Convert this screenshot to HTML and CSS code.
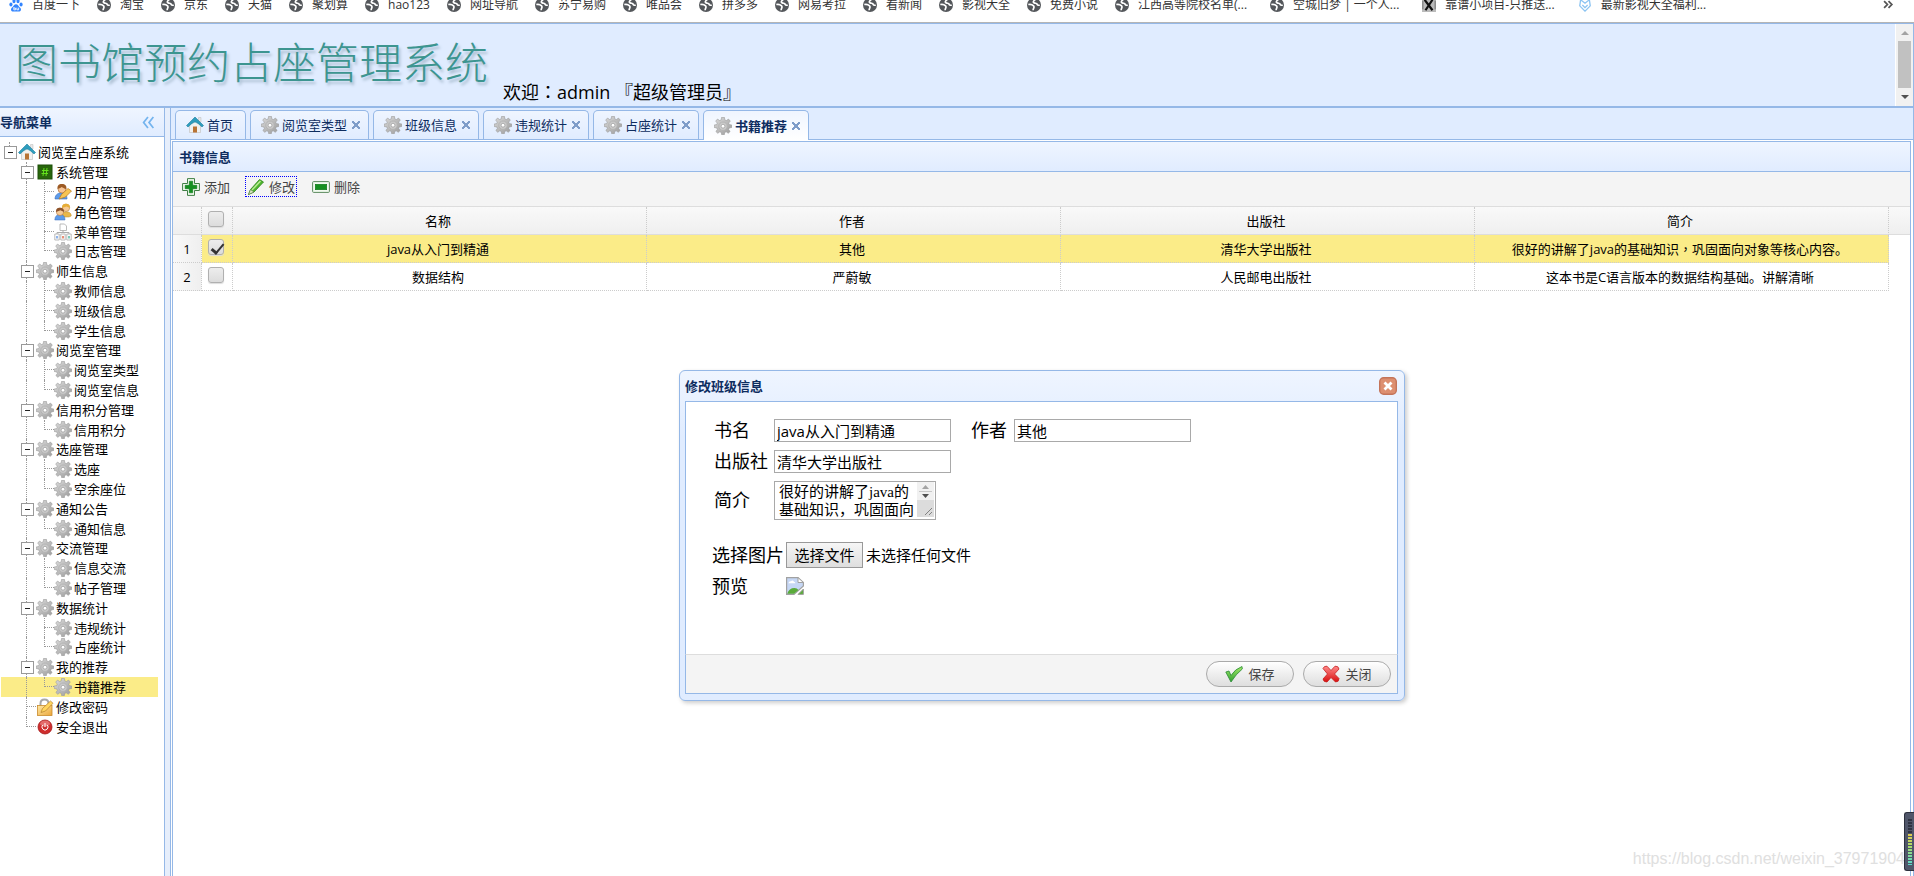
FILE: index.html
```html
<!DOCTYPE html>
<html lang="zh-CN">
<head>
<meta charset="utf-8">
<title>图书馆预约占座管理系统</title>
<link rel="stylesheet" href="styles.css">
</head>
<body>
<svg class="sprite" aria-hidden="true">
  <defs>
    <linearGradient id="gearFill" x1="0" y1="0" x2="1" y2="1"><stop offset="0" stop-color="#dcdcdc"/><stop offset="1" stop-color="#9a9a9a"/></linearGradient>
    <linearGradient id="redFill" x1="0" y1="0" x2="0" y2="1"><stop offset="0" stop-color="#ff8a8a"/><stop offset="1" stop-color="#d80f0f"/></linearGradient>
    <linearGradient id="greenFill" x1="0" y1="0" x2="0" y2="1"><stop offset="0" stop-color="#a4ec6a"/><stop offset="1" stop-color="#2f9e2f"/></linearGradient>
    <linearGradient id="goldFill" x1="0" y1="0" x2="1" y2="1"><stop offset="0" stop-color="#ffe9a6"/><stop offset="1" stop-color="#eba63a"/></linearGradient>
  </defs>
  <symbol id="globe" viewBox="0 0 16 16"><circle cx="8" cy="8" r="8" fill="#54575b"/><path d="M9.500 1.800C7.500 3 6.500 4.500 8 5.500C9.500 6.500 11 5.500 11.500 7C12 8.500 13.500 8.500 14.500 8M1.500 7.500C3.500 7 6 7.500 7.500 9C9 10.500 7 11.500 7 14" fill="none" stroke="#fff" stroke-width="1.900"/></symbol>
  <symbol id="paw" viewBox="0 0 16 16"><g fill="#3385ff"><ellipse cx="2.200" cy="7.500" rx="1.800" ry="2.300"/><ellipse cx="5.700" cy="3.500" rx="1.800" ry="2.500"/><ellipse cx="10.300" cy="3.500" rx="1.800" ry="2.500"/><ellipse cx="13.800" cy="7.500" rx="1.800" ry="2.300"/><path d="M8 7C5.800 7 5 9.500 3.200 11C1.500 12.500 2.300 15.500 4.800 15.500H11.200C13.700 15.500 14.500 12.500 12.800 11C11 9.500 10.200 7 8 7Z"/></g><path d="M5.500 10.500V13.500H7.500V11.500H5.500M9 11V13.500H11V11" stroke="#fff" fill="none"/></symbol>
  <symbol id="gear" viewBox="0 0 18 18"><path d="M7.600 .3H10.400L10.800 2.900L12.300 3.600L14.500 2.100L16.300 4.100L14.700 6.100L15.300 7.600L17.800 8V10.500L15.300 10.900L14.600 12.400L16.100 14.500L14.200 16.300L12.200 14.800L10.700 15.400L10.300 17.800H7.700L7.300 15.400L5.800 14.800L3.800 16.300L1.900 14.500L3.400 12.400L2.700 10.900L.2 10.500V8L2.700 7.600L3.300 6.100L1.700 4.100L3.500 2.100L5.700 3.600L7.200 2.900Z" fill="url(#gearFill)" stroke="#9b9b9b" stroke-width=".6"/><circle cx="9" cy="9.200" r="4.200" fill="#c9c9c9" stroke="#b0b0b0" stroke-width=".8"/><circle cx="9" cy="9.200" r="1.900" fill="#fff" stroke="#999" stroke-width=".7"/></symbol>
  <symbol id="home" viewBox="0 0 18 18"><path d="M12.500 1.500H15V6H12.500Z" fill="#e8e8e8" stroke="#bbb" stroke-width=".5"/><path d="M3.500 9L9 4L14.500 9V16.500H3.500Z" fill="#f1f1ef" stroke="#c4c4c4" stroke-width=".7"/><path d="M7 10.500H11V16.500H7Z" fill="#b87335"/><path d="M.5 9.500L9 1L17.500 9.500L16 11Q12 6.700 9 5.900Q6 6.700 2 11Z" fill="#2e9dbd" stroke="#1c7d9e" stroke-width=".6"/></symbol>
  <symbol id="hash" viewBox="0 0 18 18"><rect x="2" y="2" width="14" height="14" fill="#28660c" stroke="#1d4f08"/><path d="M8 5L7 13M11 5L10 13M6 7.500H12.500M5.500 10.500H12" stroke="#63e11c"/></symbol>
  <symbol id="user" viewBox="0 0 18 18"><path d="M1 16C1 11 5 9.500 8 10C12 10 13 13 13 16Z" fill="#5d9bea" stroke="#396fbd" stroke-width=".6"/><circle cx="8" cy="6" r="4" fill="#f7c596" stroke="#a5642d" stroke-width=".6"/><path d="M3.500 6C3 1.500 6 .8 8 1C11 1 13 2.500 12.300 6C10 5.800 9 4.500 7.500 4C6.500 5 5 5.500 3.500 6Z" fill="#9d5b25"/><path d="M5 16L7.500 11.500L14 5.500L17.500 8L11.500 14Z" fill="#f7c453" stroke="#b97a21" stroke-width=".7"/></symbol>
  <symbol id="users" viewBox="0 0 18 18"><path d="M7 12C7 8 17.500 7 17.200 13L15 14H8Z" fill="#e9b84a" stroke="#b98a30" stroke-width=".5"/><circle cx="12" cy="4.800" r="3.700" fill="#f7cb96" stroke="#a67235" stroke-width=".5"/><path d="M8 5Q8 .6 12 .8Q16 .8 16 5L12.500 3.500Z" fill="#e7ae38"/><path d="M.8 17Q1 11.500 6 11.500T11 17Z" fill="#5d9bea" stroke="#396fbd" stroke-width=".5"/><circle cx="6" cy="8.800" r="3.700" fill="#f7cb96" stroke="#a5642d" stroke-width=".5"/><path d="M2 9Q2 4.500 6 4.800Q10 4.800 10 9L6.500 7.200Z" fill="#8d522a"/></symbol>
  <symbol id="sitemap" viewBox="0 0 18 18"><path d="M6 1H10.500L12.500 3V7.500H6Z" fill="#fff" stroke="#aaa" stroke-width=".8"/><path d="M9 7.500V10M3 11V9.500H15V11" fill="none" stroke="#aaa"/><path d="M.8 11H5.200V17H.8ZM6.800 11H11.200V17H6.800ZM12.800 11H17.200V17H12.800Z" fill="#fff" stroke="#aaa" stroke-width=".8"/><path d="M3 13V15.500" stroke="#6a9be5" stroke-width="1.500"/><path d="M9 13V15.500" stroke="#e06a4a" stroke-width="1.500"/><path d="M15 13V15.500" stroke="#54b8a3" stroke-width="1.500"/></symbol>
  <symbol id="lock" viewBox="0 0 18 18"><path d="M4.500 8V5.500Q4.500 1.500 8.500 1.500T12.500 5.500V8" fill="none" stroke="#a8a8a8" stroke-width="2"/><rect x="1.500" y="7.500" width="14.500" height="10" fill="url(#goldFill)" stroke="#c98b2c" stroke-width=".8"/><path d="M5 14.500L6.500 10.500L14.500 3L17 5.300L9.500 13Z" fill="#ffd55e" stroke="#b5802a" stroke-width=".7"/></symbol>
  <symbol id="power" viewBox="0 0 18 18"><circle cx="9" cy="9" r="7" fill="#cf2d2d" stroke="#a31818" stroke-width=".8"/><ellipse cx="9" cy="5.500" rx="5" ry="3" fill="#ec8585" opacity=".7"/><path d="M7 6.800A3 3 0 1 0 11 6.800M9 5V9" fill="none" stroke="#fff"/></symbol>
  <symbol id="add" viewBox="0 0 18 18"><path d="M5.500 .6H12.500V5.500H17.400V12.500H12.500V17.400H5.500V12.500H.6V5.500H5.500Z" fill="#f1faef" stroke="#407f45" stroke-linejoin="round"/><path d="M7.300 3.200H10.700V7.300H14.800V10.700H10.700V14.800H7.300V10.700H3.200V7.300H7.300Z" fill="#159020" stroke="#0b7417" stroke-width=".6"/></symbol>
  <symbol id="pencil" viewBox="0 0 18 18"><path d="M1.500 16.500L3.500 11.500L12.500 1.500L16.500 4L7 14Z" fill="#4fb62f" stroke="#2c831b" stroke-width=".8"/><path d="M5 12L13.500 3" stroke="#b9ec94" stroke-width="1.500"/><path d="M1.500 16.500L3.500 11.500L7 14Z" fill="#d9e7bf" stroke="#587b45" stroke-width=".6"/></symbol>
  <symbol id="minus" viewBox="0 0 18 18"><rect x=".6" y="3.600" width="16.800" height="10.800" rx="1" fill="#f1faef" stroke="#5c8a5f"/><rect x="3.300" y="6.300" width="11.400" height="5.400" fill="#159020" stroke="#0b7417" stroke-width=".6"/></symbol>
  <symbol id="ok" viewBox="0 0 18 18"><path d="M.8 7L4 6L6 10.500Q10 4 17 1.500L17.300 4Q11 9 6 17Z" fill="url(#greenFill)" stroke="#2a8a35" stroke-width=".8"/></symbol>
  <symbol id="cancel" viewBox="0 0 18 18"><path d="M1 3.500Q2 .8 5 1.200L9 5.500L13 1.200Q16.500 .8 17 4L12.500 9L17 13.500Q17 17 13.500 17L9 12.500L5 17Q1.500 17.200 1 14L5.500 9Z" fill="url(#redFill)" stroke="#c41e1e" stroke-width=".8"/></symbol>
  <symbol id="broken" viewBox="0 0 18 18"><path d="M.6 .6H12L17.400 5.500V9L8 17.400H.6Z" fill="#c6d7f5" stroke="#a1a1a1" stroke-width="1.200"/><path d="M12 .6V5.500H17.400Z" fill="#fff" stroke="#a1a1a1"/><path d="M2.500 6Q3 4 5 4.300Q6.500 2.500 8 4.700Q9.500 5 9.300 6.200H2.500Z" fill="#fff"/><path d="M1.200 16.800Q3 11 8.500 11Q11 11 12.500 13L8 16.800Z" fill="#5aab3a"/><path d="M17.400 12V17.400H12Z" fill="#5aab3a" stroke="#a1a1a1"/></symbol>
</svg>

<nav class="bookmarks" aria-label="书签">
  <a href="#"><svg><use href="#paw"/></svg>百度一下</a>
  <a href="#"><svg><use href="#globe"/></svg>淘宝</a>
  <a href="#"><svg><use href="#globe"/></svg>京东</a>
  <a href="#"><svg><use href="#globe"/></svg>天猫</a>
  <a href="#"><svg><use href="#globe"/></svg>聚划算</a>
  <a href="#"><svg><use href="#globe"/></svg>hao123</a>
  <a href="#"><svg><use href="#globe"/></svg>网址导航</a>
  <a href="#"><svg><use href="#globe"/></svg>苏宁易购</a>
  <a href="#"><svg><use href="#globe"/></svg>唯品会</a>
  <a href="#"><svg><use href="#globe"/></svg>拼多多</a>
  <a href="#"><svg><use href="#globe"/></svg>网易考拉</a>
  <a href="#"><svg><use href="#globe"/></svg>看新闻</a>
  <a href="#"><svg><use href="#globe"/></svg>影视大全</a>
  <a href="#"><svg><use href="#globe"/></svg>免费小说</a>
  <a href="#" class="long"><svg><use href="#globe"/></svg>江西高等院校名单(...</a>
  <a href="#" class="long"><svg><use href="#globe"/></svg>空城旧梦 | 一个人...</a>
  <a href="#" class="long"><svg viewBox="0 0 16 16"><path d="M0 0H16V16H0Z" fill="#bbb"/><path d="M3 2L12 14M12 2L4 14" stroke="#111" stroke-width="2.500"/><path d="M1 3V13M15 3V13" stroke="#666"/></svg>靠谱小项目-只推送...</a>
  <a href="#" class="long"><svg viewBox="0 0 16 16"><path d="M3 2L8 6L13 2L14 9L8 15L2 9ZM5 8L8 11L11 8" fill="none" stroke="#8cc4f2" stroke-width="1.500"/></svg>最新影视大全福利...</a>
  <button class="more" type="button" aria-label="更多书签"><svg viewBox="0 0 10 8"><path d="M1 1L4 4L1 7M5 1L8 4L5 7" fill="none" stroke="#555" stroke-width="1.600"/></svg></button>
</nav>

<header class="north">
  <h1>图书馆预约占座管理系统</h1>
  <p class="welcome">欢迎<span class="mid" lang="zh-TW">：</span>admin 『超级管理员』</p>
  <div class="scroll" aria-hidden="true"><i class="up"></i><b></b><i class="down"></i></div>
</header>

<div class="layout">
  <aside class="west">
    <div class="west-head"><h2>导航菜单</h2><button type="button" aria-label="收起"><svg viewBox="0 0 12 12"><path d="M5.500 1L1.500 6L5.500 11M10.500 1L6.500 6L10.500 11" fill="none" stroke="#74b4ee" stroke-width="1.600"/></svg></button></div>
    <ul class="tree">
      <li><i class="box root"></i><svg><use href="#home"/></svg><a href="#">阅览室占座系统</a></li>
      <li><i></i><i class="box"></i><svg><use href="#hash"/></svg><a href="#">系统管理</a></li>
      <li><i></i><i class="line"></i><i class="join"></i><svg><use href="#user"/></svg><a href="#">用户管理</a></li>
      <li><i></i><i class="line"></i><i class="join"></i><svg><use href="#users"/></svg><a href="#">角色管理</a></li>
      <li><i></i><i class="line"></i><i class="join"></i><svg><use href="#sitemap"/></svg><a href="#">菜单管理</a></li>
      <li><i></i><i class="line"></i><i class="join end"></i><svg><use href="#gear"/></svg><a href="#">日志管理</a></li>
      <li><i></i><i class="box"></i><svg><use href="#gear"/></svg><a href="#">师生信息</a></li>
      <li><i></i><i class="line"></i><i class="join"></i><svg><use href="#gear"/></svg><a href="#">教师信息</a></li>
      <li><i></i><i class="line"></i><i class="join"></i><svg><use href="#gear"/></svg><a href="#">班级信息</a></li>
      <li><i></i><i class="line"></i><i class="join end"></i><svg><use href="#gear"/></svg><a href="#">学生信息</a></li>
      <li><i></i><i class="box"></i><svg><use href="#gear"/></svg><a href="#">阅览室管理</a></li>
      <li><i></i><i class="line"></i><i class="join"></i><svg><use href="#gear"/></svg><a href="#">阅览室类型</a></li>
      <li><i></i><i class="line"></i><i class="join end"></i><svg><use href="#gear"/></svg><a href="#">阅览室信息</a></li>
      <li><i></i><i class="box"></i><svg><use href="#gear"/></svg><a href="#">信用积分管理</a></li>
      <li><i></i><i class="line"></i><i class="join end"></i><svg><use href="#gear"/></svg><a href="#">信用积分</a></li>
      <li><i></i><i class="box"></i><svg><use href="#gear"/></svg><a href="#">选座管理</a></li>
      <li><i></i><i class="line"></i><i class="join"></i><svg><use href="#gear"/></svg><a href="#">选座</a></li>
      <li><i></i><i class="line"></i><i class="join end"></i><svg><use href="#gear"/></svg><a href="#">空余座位</a></li>
      <li><i></i><i class="box"></i><svg><use href="#gear"/></svg><a href="#">通知公告</a></li>
      <li><i></i><i class="line"></i><i class="join end"></i><svg><use href="#gear"/></svg><a href="#">通知信息</a></li>
      <li><i></i><i class="box"></i><svg><use href="#gear"/></svg><a href="#">交流管理</a></li>
      <li><i></i><i class="line"></i><i class="join"></i><svg><use href="#gear"/></svg><a href="#">信息交流</a></li>
      <li><i></i><i class="line"></i><i class="join end"></i><svg><use href="#gear"/></svg><a href="#">帖子管理</a></li>
      <li><i></i><i class="box"></i><svg><use href="#gear"/></svg><a href="#">数据统计</a></li>
      <li><i></i><i class="line"></i><i class="join"></i><svg><use href="#gear"/></svg><a href="#">违规统计</a></li>
      <li><i></i><i class="line"></i><i class="join end"></i><svg><use href="#gear"/></svg><a href="#">占座统计</a></li>
      <li><i></i><i class="box"></i><svg><use href="#gear"/></svg><a href="#">我的推荐</a></li>
      <li class="selected"><i></i><i class="line"></i><i class="join end"></i><svg><use href="#gear"/></svg><a href="#">书籍推荐</a></li>
      <li><i></i><i class="join"></i><svg><use href="#lock"/></svg><a href="#">修改密码</a></li>
      <li><i></i><i class="join end"></i><svg><use href="#power"/></svg><a href="#">安全退出</a></li>
    </ul>
  </aside>

  <main class="center">
    <div class="tabs">
      <div class="tab"><svg><use href="#home"/></svg><a href="#">首页</a></div>
      <div class="tab closable"><svg><use href="#gear"/></svg><a href="#">阅览室类型</a><button type="button" aria-label="关闭标签"></button></div>
      <div class="tab closable"><svg><use href="#gear"/></svg><a href="#">班级信息</a><button type="button" aria-label="关闭标签"></button></div>
      <div class="tab closable"><svg><use href="#gear"/></svg><a href="#">违规统计</a><button type="button" aria-label="关闭标签"></button></div>
      <div class="tab closable"><svg><use href="#gear"/></svg><a href="#">占座统计</a><button type="button" aria-label="关闭标签"></button></div>
      <div class="tab closable active"><svg><use href="#gear"/></svg><a href="#">书籍推荐</a><button type="button" aria-label="关闭标签"></button></div>
    </div>
    <section class="panel">
      <h2 class="panel-title">书籍信息</h2>
      <div class="toolbar">
        <button type="button"><svg><use href="#add"/></svg>添加</button>
        <button type="button" class="focused"><svg><use href="#pencil"/></svg>修改</button>
        <button type="button"><svg><use href="#minus"/></svg>删除</button>
      </div>
      <table class="grid">
        <colgroup><col class="c-num"><col class="c-check"><col><col><col><col><col class="c-rest"></colgroup>
        <thead>
          <tr><th></th><th class="check"><input type="checkbox" aria-label="全选"></th><th>名称</th><th>作者</th><th>出版社</th><th>简介</th><th class="rest"></th></tr>
        </thead>
        <tbody>
          <tr class="picked"><td class="num">1</td><td class="check"><input type="checkbox" aria-label="选择第1行" checked></td><td>java从入门到精通</td><td>其他</td><td>清华大学出版社</td><td>很好的讲解了java的基础知识<span class="mid" lang="zh-TW">，</span>巩固面向对象等核心内容。</td><td class="rest"></td></tr>
          <tr><td class="num">2</td><td class="check"><input type="checkbox" aria-label="选择第2行"></td><td>数据结构</td><td>严蔚敏</td><td>人民邮电出版社</td><td>这本书是C语言版本的数据结构基础。讲解清晰</td><td class="rest"></td></tr>
        </tbody>
      </table>
    </section>
  </main>
</div>

<form class="dialog" role="dialog" aria-labelledby="dlg-title">
  <div class="dialog-head"><h2 id="dlg-title">修改班级信息</h2><button type="button" class="close" aria-label="关闭窗口"><svg viewBox="0 0 18 18"><rect x=".7" y=".7" width="16.600" height="16.600" rx="4" fill="#dd8f70" stroke="#c47459" stroke-width="1.400"/><path d="M5.500 5.500L12.500 12.500M12.500 5.500L5.500 12.500" stroke="#fff" stroke-width="2.800"/></svg></button></div>
  <div class="dialog-body">
    <div class="fields">
      <label for="f-name">书名</label><input id="f-name" type="text" value="java从入门到精通">
      <label for="f-author" class="second">作者</label><input id="f-author" type="text" value="其他">
      <label for="f-press">出版社</label><input id="f-press" type="text" value="清华大学出版社">
      <label for="f-intro" class="row-start">简介</label>
      <div class="area"><textarea id="f-intro">很好的讲解了java的基础知识，巩固面向对象等核心内容。</textarea><span class="area-bar" aria-hidden="true"><svg viewBox="0 0 17 35"><path d="M0 0H17V18H0Z" fill="#f1f1f1"/><path d="M0 18H17V35H0Z" fill="#dcdcdc"/><path d="M5 7L8.500 3L12 7Z" fill="#a3a3a3"/><path d="M2 9.500H15" stroke="#c8c8c8"/><path d="M5 12L8.500 16L12 12Z" fill="#505050"/><path d="M8 33L15 26M12 33L15 30" stroke="#777" stroke-width=".9"/></svg></span></div>
    </div>
    <div class="upload">
      <label for="f-file">选择图片</label>
      <div class="picker"><input id="f-file" type="file"><button type="button">选择文件</button><span>未选择任何文件</span></div>
      <span class="cap">预览</span>
      <svg class="preview" role="img"><use href="#broken"/></svg>
    </div>
  </div>
  <div class="dialog-foot">
    <button type="button"><svg><use href="#ok"/></svg>保存</button>
    <button type="button"><svg><use href="#cancel"/></svg>关闭</button>
  </div>
</form>

<p class="watermark">https://blog.csdn.net/weixin_37971904</p>
<div class="meter" aria-hidden="true"></div>
</body>
</html>
```
FILE: styles.css
```css
* { box-sizing: border-box; }
html, body { height: 100%; }
body {
  margin: 0;
  display: flex;
  flex-direction: column;
  overflow: hidden;
  background: #fff;
  color: #000;
  font: 13px/20px "Open Sans", "Noto Sans CJK SC", sans-serif;
}
h1, h2, p, ul { margin: 0; padding: 0; }
a { color: inherit; text-decoration: none; white-space: nowrap; }
button { font: inherit; color: inherit; background: none; border: 0; padding: 0; }
svg { display: block; flex: none; width: 18px; height: 18px; }
.sprite { position: absolute; width: 0; height: 0; }
.mid { font-family: "Noto Sans CJK TC", sans-serif; }

/* bookmarks */
.bookmarks {
  display: flex;
  flex: none;
  align-items: center;
  height: 23px;
  padding: 0 20px 13px 9px;
  border-bottom: 1px solid #b5b5b5;
  color: #333;
  font-size: 12px;
  line-height: 16px;
}
.bookmarks a { display: flex; align-items: center; gap: 9px; margin-right: 17px; }
.bookmarks .long { margin-right: 23px; }
.bookmarks svg { width: 14px; height: 14px; }
.more { margin-left: auto; }
.bookmarks .more svg { width: 11px; height: 9px; }

/* page header */
.north {
  display: flex;
  flex: none;
  height: 85px;
  border: 1px solid #95b8e7;
  border-bottom-width: 2px;
  border-left: 0;
  background: #e0ecff;
}
.north h1 {
  padding: 9px 0 0 15px;
  color: #3d9590;
  font-size: 43px;
  font-weight: 300;
  line-height: 60px;
  text-shadow: 2px 3px 3px #a9bdd0;
  white-space: nowrap;
}
.welcome { margin: auto 0 1px 15px; font-size: 18px; line-height: 26px; white-space: nowrap; }
.scroll {
  display: flex;
  flex-direction: column;
  align-items: center;
  width: 18px;
  margin-left: auto;
  padding: 7px 0 6px;
  border-left: 1px solid #fff;
  background: #f1f1f1;
}
.scroll b { width: 13px; height: 47px; margin: 6px 0 7px; background: #c1c1c1; }
.scroll i { border: 4px solid transparent; border-top: 0; border-bottom-color: #a3a3a3; }
.scroll .down { border-top: 4px solid #505050; border-bottom: 0; }

.layout { display: flex; flex: 1; min-height: 0; background: #e6eefb; }

/* navigation tree */
.west { flex: none; width: 165px; border-right: 1px solid #95b8e7; background: #fff; }
.west-head {
  display: flex;
  align-items: center;
  justify-content: space-between;
  height: 29px;
  padding-right: 9px;
  border-bottom: 1px solid #95b8e7;
  background: linear-gradient(#eff5ff, #e0ecff);
}
h2 { color: #0e2d5f; font-size: 13px; font-weight: 700; line-height: 20px; }
.west-head svg { width: 13px; height: 13px; }
.tree { padding: 5px 6px 0 1px; list-style: none; }
.tree li { display: flex; align-items: center; height: 20px; }
.tree li:nth-child(5n) { height: 19px; }
.tree a { padding-left: 2px; }
.tree i { position: relative; flex: none; align-self: stretch; width: 18px; }
.tree i:first-child { width: 17px; }
.tree .selected { background: #fbec88; }
.line::before, .join::before, .box::before {
  content: "";
  position: absolute;
  inset: 0 auto 0 8px;
  border-left: 1px dotted #999;
}
.join.end::before, .root::before { bottom: 50%; }
.join::after { content: ""; position: absolute; top: 9px; left: 8px; right: 0; border-top: 1px dotted #999; }
.box::after {
  content: "";
  position: absolute;
  top: 4px;
  left: 3px;
  width: 11px;
  height: 11px;
  border: 1px solid #999;
  background: linear-gradient(#222, #222) center / 5px 1px no-repeat #fff;
}

/* tabs */
.center { display: flex; flex: 1; flex-direction: column; min-width: 0; margin-left: 5px; border: 1px solid #95b8e7; border-width: 0 1px; background: #fff; }
.tabs { display: flex; flex: none; gap: 4px; height: 32px; padding: 2px 4px 0; border-bottom: 1px solid #95b8e7; background: #e0ecff; }
.tab {
  display: flex;
  align-items: center;
  gap: 3px;
  padding: 0 12px 0 10px;
  border: 1px solid #95b8e7;
  border-bottom: 0;
  border-radius: 5px 5px 0 0;
  background: linear-gradient(#eff5ff, #e0ecff);
  color: #0e2d5f;
}
.tab.closable { padding-right: 8px; }
.tab button {
  width: 8px;
  height: 8px;
  margin-left: 2px;
  background:
    linear-gradient(45deg, transparent 42%, #7f9dc9 42%, #7f9dc9 58%, transparent 58%),
    linear-gradient(-45deg, transparent 42%, #7f9dc9 42%, #7f9dc9 58%, transparent 58%);
}
.tab.active { margin-bottom: -1px; background: linear-gradient(#eff5ff, #fff); font-weight: 700; }

/* book panel */
.panel { flex: 1; margin: 1px 2px 0 1px; border: 1px solid #95b8e7; border-bottom: 0; }
.panel-title { padding: 5px 6px 4px; border-bottom: 1px solid #95b8e7; background: linear-gradient(#eff5ff, #e0ecff); }
.toolbar { display: flex; align-items: flex-start; gap: 13px; height: 35px; padding: 4px 7px; border-bottom: 1px solid #ddd; background: #f4f4f4; color: #444; }
.toolbar button { display: flex; align-items: center; gap: 4px; height: 21px; padding: 0 1px; border: 1px solid transparent; }
.toolbar .focused { border: 1px dotted #00f; }

.grid { width: 100%; border-collapse: separate; border-spacing: 0; table-layout: fixed; text-align: center; }
.c-num { width: 29px; }
.c-check { width: 31px; }
.c-rest { width: 21px; }
.grid th, .grid td { height: 28px; padding: 0 3px 0 0; border: 1px dotted #ccc; border-width: 0 1px 1px 0; font-weight: 400; }
.grid th { border-bottom: 1px solid #ddd; background: linear-gradient(#f9f9f9, #efefef); }
.grid .rest { padding: 0; border-right: 0; }
.grid td.rest { border: 0; background: #fff; }
.picked td { background: #fbec88; }
.grid .num { padding: 0; background: linear-gradient(90deg, #f9f9f9, #efefef); }
.grid .check { padding-bottom: 4px; line-height: 0; }
.grid input {
  appearance: none;
  width: 16px;
  height: 16px;
  margin: 0;
  border: 1px solid #b0b0b0;
  border-radius: 3px;
  background: linear-gradient(#ededed, #dcdcdc);
  box-shadow: 0 1px 1px #ddd;
  vertical-align: middle;
}
.grid input:checked { position: relative; }
.grid input:checked::after {
  content: "";
  position: absolute;
  top: 1px;
  left: 5px;
  width: 5px;
  height: 10px;
  border: solid #333;
  border-width: 0 2px 3px 0;
  transform: rotate(40deg);
}

/* edit dialog */
.dialog {
  position: absolute;
  top: 370px;
  left: 679px;
  width: 726px;
  padding: 0 6px 6px 5px;
  border: 1px solid #95b8e7;
  border-radius: 6px;
  background: linear-gradient(#eff5ff, #e0ecff 20%);
  box-shadow: 2px 2px 4px #ccc;
}
.dialog-head { display: flex; align-items: center; justify-content: space-between; height: 30px; padding-right: 1px; }
.dialog-body { min-height: 254px; padding: 17px 26px; border: 1px solid #95b8e7; border-bottom-color: #ddd; background: #fff; font-size: 18px; line-height: 26px; }
.fields { display: grid; grid-template-columns: 60px 177px 63px 177px; row-gap: 8px; align-items: center; padding-left: 2px; line-height: 23px; }
.fields .second { padding-left: 20px; }
.fields .row-start { grid-column: 1; }
.fields input { height: 23px; padding: 1px 2px; border: 1px solid #a9a9a9; font: 15px/19px "Open Sans", "Noto Sans CJK SC", sans-serif; }
.area { position: relative; width: 162px; height: 39px; }
.area textarea {
  display: block;
  width: 100%;
  height: 100%;
  padding: 1px 20px 0 4px;
  border: 1px solid #a9a9a9;
  overflow: hidden;
  resize: none;
  font: 15px/18px "Liberation Serif", "Noto Sans CJK SC", serif;
}
.area-bar { position: absolute; top: 1px; right: 2px; }
.area-bar svg { width: 17px; height: 35px; }
.upload { display: grid; grid-template-columns: 74px 1fr; row-gap: 5px; align-items: center; padding-top: 22px; }
.picker { position: relative; display: flex; align-items: center; gap: 3px; font-size: 15px; }
.picker input { position: absolute; width: 77px; height: 26px; opacity: 0; }
.picker button { width: 77px; height: 26px; border: 1px solid #999; background: linear-gradient(#f6f6f6, #dedede); line-height: 22px; }
.dialog-foot { display: flex; justify-content: flex-end; gap: 9px; padding: 6px; border: 1px solid #95b8e7; border-top: 0; background: #f4f4f4; color: #444; }
.dialog-foot button { display: flex; align-items: center; justify-content: center; gap: 5px; width: 88px; height: 26px; border: 1px solid #aaa; border-radius: 13px; background: linear-gradient(#fff, #dedede); }

.watermark { position: absolute; right: 9px; bottom: 6px; color: #e0e0e0; font: 16px/22px "Liberation Sans", sans-serif; }
.meter {
  position: absolute;
  right: 0;
  bottom: 5px;
  width: 10px;
  height: 59px;
  border: 1px solid #2c303d;
  border-right: 0;
  border-radius: 3px 0 0 3px;
  background:
    repeating-linear-gradient(transparent 0 2px, #50566a 2px 3px) 3px 6px / 4px 46px no-repeat,
    linear-gradient(#2f3342 30%, #e8c84d 30%, #a8dd6c 60%, #59d9cf) 3px 6px / 4px 46px no-repeat,
    #50566a;
}
```
